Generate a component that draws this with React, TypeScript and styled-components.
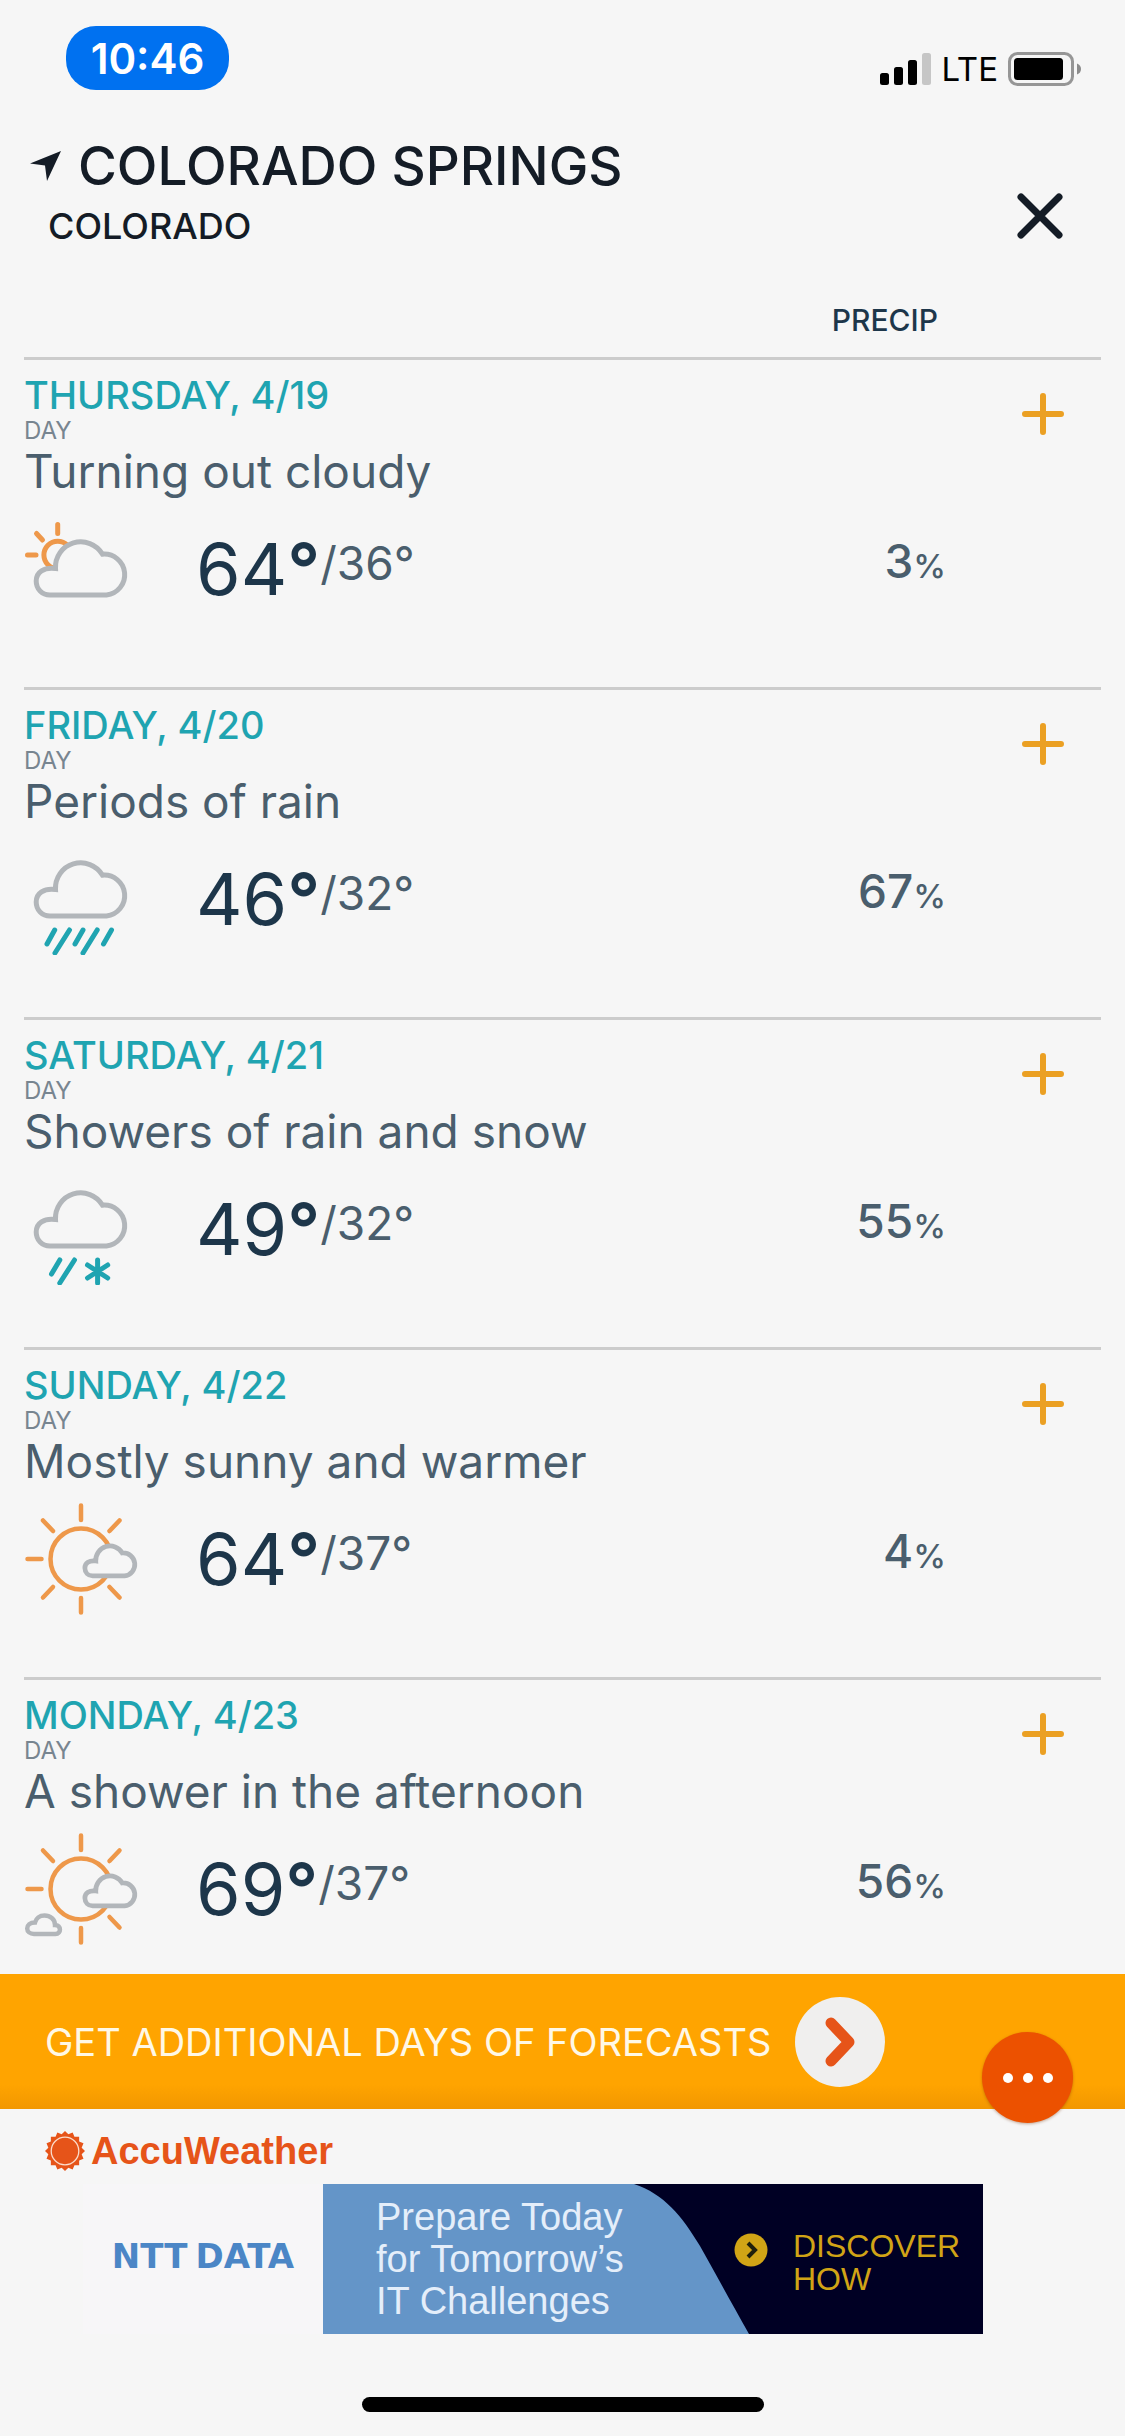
import React from 'react';
import styled, { createGlobalStyle } from 'styled-components';

const color = {
  page: '#f6f6f6',
  ink: '#141c26',
  navy: '#1d364a',
  slate: '#4a5e6d',
  muted: '#788590',
  teal: '#1fa4b1',
  rule: '#cccccc',
  amber: '#ffa400',
  plus: '#eba023',
  sun: '#ee984a',
  cloud: '#b2b6ba',
  brand: '#e65419',
};

const GlobalStyle = createGlobalStyle`
  *, *::before, *::after { box-sizing: border-box; }
  body {
    margin: 0;
    background: ${color.page};
    font-family: Inter, 'Liberation Sans', sans-serif;
  }
  h1, h2, p, ul { margin: 0; padding: 0; font-weight: 400; }
  button { margin: 0; padding: 0; border: 0; background: none; font: inherit; cursor: pointer; }
`;

const Screen = styled.div`
  display: flex;
  flex-direction: column;
  height: 100vh;
  background: ${color.page};
`;

const StatusBar = styled.div`
  display: flex;
  justify-content: space-between;
  align-items: flex-end;
  padding: 26px 43px 0 66px;
`;

const Clock = styled.div`
  display: flex;
  align-items: center;
  justify-content: center;
  width: 163px;
  height: 64px;
  border-radius: 30px;
  background: #0071f0;
  color: #fff;
  font-size: 42px;
  font-weight: 600;
`;

const Signals = styled.div`
  display: flex;
  align-items: center;
  gap: 10px;
  height: 34px;
  margin-bottom: 4px;
`;

const Network = styled.span`
  font-size: 33px;
  line-height: 34px;
  color: #000;
`;

const Header = styled.header`
  display: flex;
  justify-content: space-between;
  align-items: flex-end;
  padding: 46px 55px 0 30px;
`;

const Place = styled.div`
  display: flex;
  flex-direction: column;
  gap: 10px;
`;

const City = styled.h1`
  display: flex;
  align-items: center;
  gap: 16px;
  color: ${color.ink};
  font-size: 53px;
  font-weight: 500;
  line-height: 60px;
`;

const Region = styled.p`
  padding-left: 18px;
  color: ${color.ink};
  font-size: 36px;
  font-weight: 500;
  line-height: 40px;
`;

const IconButton = styled.button`
  display: flex;
  flex: none;
  align-items: center;
  justify-content: center;
  width: 60px;
  height: 60px;
`;

const ColumnTitle = styled.p`
  padding: 56px 187px 18px 0;
  color: ${color.navy};
  font-size: 30px;
  font-weight: 500;
  line-height: 37px;
  text-align: right;
`;

const DayList = styled.ul`
  flex: 1;
  min-height: 0;
  padding: 0 24px;
  overflow: hidden auto;
  scrollbar-width: none;
  list-style: none;
`;

const DayItem = styled.li`
  padding: 13px 0 62px;
  border-top: 3px solid ${color.rule};
`;

const DayHead = styled.div`
  display: flex;
  justify-content: space-between;
  align-items: flex-start;
  padding-right: 28px;
`;

const ExpandButton = styled(IconButton)`
  margin-top: 11px;
`;

const DateLabel = styled.h2`
  color: ${color.teal};
  font-size: 38px;
  font-weight: 500;
  line-height: 44px;
`;

const Period = styled.p`
  color: ${color.muted};
  font-size: 24px;
  line-height: 28px;
`;

const Summary = styled.p`
  color: ${color.slate};
  font-size: 46px;
  line-height: 52px;
`;

const Conditions = styled.div`
  display: flex;
  align-items: center;
  margin-top: 16px;
  padding-right: 155px;
`;

const High = styled.span`
  margin-left: 56px;
  color: ${color.navy};
  font-size: 72px;
  line-height: 112px;
`;

const Degree = styled.span`
  font-weight: 600;
`;

const Low = styled.span`
  padding-bottom: 12px;
  color: ${color.slate};
  font-size: 46px;
  line-height: 52px;
`;

const Precip = styled.span`
  margin-left: auto;
  padding-bottom: 12px;
  color: ${color.slate};
  font-size: 46px;
  font-weight: 500;
  line-height: 52px;
`;

const Percent = styled.span`
  font-size: 33px;
`;

const MoreDays = styled.div`
  position: relative;
  display: flex;
  align-items: center;
  height: 135px;
  padding-left: 45px;
  background: linear-gradient(to bottom, ${color.amber} 82%, #f29700 100%);
`;

const MoreDaysButton = styled.button`
  display: flex;
  align-items: center;
  gap: 24px;
  color: #fff8e6;
  font-size: 38px;
  font-weight: 400;
  line-height: 44px;
`;

const Disc = styled.span`
  display: flex;
  flex: none;
  align-items: center;
  justify-content: center;
  width: 90px;
  height: 90px;
  border-radius: 50%;
  background: #f0efee;
`;

const MenuButton = styled.button`
  position: absolute;
  right: 52px;
  bottom: -14px;
  display: flex;
  align-items: center;
  justify-content: center;
  width: 91px;
  height: 91px;
  border-radius: 50%;
  background: #ec5100;
  box-shadow: 0 1px 3px rgba(120, 50, 0, 0.4);
`;

const Footer = styled.footer`
  display: flex;
  flex-direction: column;
  padding: 20px 0 24px;
`;

const Brand = styled.div`
  display: flex;
  align-items: center;
  gap: 6px;
  padding-left: 45px;
  color: ${color.brand};
  font-family: 'Liberation Sans', Arial, sans-serif;
  font-size: 38px;
  font-weight: 700;
  line-height: 44px;
`;

const Ad = styled.a`
  display: flex;
  width: 900px;
  height: 150px;
  margin: 11px 0 0 83px;
  background: #000024;
  font-family: 'Liberation Sans', Arial, sans-serif;
  text-decoration: none;
`;

const Sponsor = styled.span`
  display: flex;
  align-items: center;
  justify-content: center;
  gap: 8px;
  width: 240px;
  padding-bottom: 6px;
  background: #f7f6f8;
  color: #4b86c6;
  font-family: 'DejaVu Sans', sans-serif;
  font-size: 34px;
  font-weight: 700;
`;

const Pitch = styled.span`
  width: 311px;
  padding: 12px 0 0 53px;
  background: #6495c8;
  color: #e4eefa;
  font-size: 38px;
  line-height: 42px;
  white-space: pre-line;
`;

const Offer = styled.span`
  display: flex;
  align-items: flex-start;
  gap: 25px;
  color: #d1a416;
  font-size: 32px;
  line-height: 33px;
`;

const OfferText = styled.span`
  padding-top: 46px;
`;

const OfferMark = styled.svg`
  margin: 49px 0 0 -15px;
`;

const HomeIndicator = styled.div`
  align-self: center;
  width: 402px;
  height: 15px;
  margin-top: 63px;
  border-radius: 8px;
  background: #000;
`;

const CLOUD =
  'M26 82H82.5A20.5 20.5 0 0 0 78.5 41.2A25.3 25.3 0 0 0 31.5 55.5C20 54 12.2 59 12.2 68C12.2 76 18 82 26 82Z';

function Cloud({ transform, width = 5 }: { transform?: string; width?: number }) {
  return <path d={CLOUD} transform={transform} stroke={color.cloud} strokeWidth={width} fill={color.page} />;
}

type Kind = 'clouding' | 'rain' | 'mixed' | 'sunny' | 'shower';

function WeatherIcon({ kind }: { kind: Kind }) {
  const bright = kind === 'sunny' || kind === 'shower';
  return (
    <svg width="116" height="112" viewBox="0 0 116 112" fill="none" strokeLinecap="round" aria-hidden="true">
      {kind === 'clouding' && (
        <>
          <g stroke={color.sun} strokeWidth="5">
            <circle cx="33.7" cy="42" r="13.8" />
            <path d="M33.7 11.5V20.5M3.5 42H12M12.5 20.5L18.500 27" />
          </g>
          <Cloud />
        </>
      )}
      {kind === 'rain' && (
        <>
          <Cloud transform="translate(0 -9)" />
          <path
            stroke={color.teal}
            strokeWidth="5"
            d="M30.7 87L23 101M45.5 87L31 110M59 87L51 101M73.2 87L59 110M87.5 87L79.5 101"
          />
        </>
      )}
      {kind === 'mixed' && (
        <>
          <Cloud transform="translate(0 -9)" />
          <path
            stroke={color.teal}
            strokeWidth="5"
            d="M35.8 87L27.5 101M50.5 87L35.8 110M73.6 87V110M63.5 92L83.7 105M83.7 92L63.5 105"
          />
        </>
      )}
      {bright && (
        <>
          <g stroke={color.sun} strokeWidth="4.5">
            <circle cx="57" cy="56" r="30.5" />
            <path d="M57 2.5V17M57 95V109.5M3.5 56H17.5M19 17.5L29 28M95.5 17.5L85.5 28M95.5 94.5L85.5 84" />
            {kind === 'sunny' && <path d="M19 94.5L29 84" />}
          </g>
          <Cloud transform="translate(54 26.7) scale(.564)" width={8.4} />
        </>
      )}
      {kind === 'shower' && (
        <path
          d="M10 101H31.5C37.5 101 37.5 92 31 92C31 86 26 82.6 20.5 82.6C15.5 82.6 12 85.5 11 89.5C6 89.5 3.2 92 3.2 95.5C3.2 98.5 6 101 10 101Z"
          stroke={color.cloud}
          strokeWidth="4.5"
          fill={color.page}
        />
      )}
    </svg>
  );
}

function BrandSun() {
  const points = Array.from({ length: 32 }, (_, i) => {
    const radius = i % 2 ? 17 : 20;
    const angle = (i * Math.PI) / 16;
    return `${20 + radius * Math.sin(angle)},${20 - radius * Math.cos(angle)}`;
  }).join(' ');
  return (
    <svg width="40" height="40" viewBox="0 0 40 40" aria-hidden="true">
      <polygon points={points} fill={color.brand} />
      <circle cx="20" cy="20" r="13.8" fill="none" stroke="#fbdccb" strokeWidth="1.3" />
    </svg>
  );
}

interface Day {
  date: string;
  summary: string;
  high: number;
  low: number;
  precip: number;
  kind: Kind;
}

const days: Day[] = [
  { date: 'THURSDAY, 4/19', summary: 'Turning out cloudy', high: 64, low: 36, precip: 3, kind: 'clouding' },
  { date: 'FRIDAY, 4/20', summary: 'Periods of rain', high: 46, low: 32, precip: 67, kind: 'rain' },
  { date: 'SATURDAY, 4/21', summary: 'Showers of rain and snow', high: 49, low: 32, precip: 55, kind: 'mixed' },
  { date: 'SUNDAY, 4/22', summary: 'Mostly sunny and warmer', high: 64, low: 37, precip: 4, kind: 'sunny' },
  { date: 'MONDAY, 4/23', summary: 'A shower in the afternoon', high: 69, low: 37, precip: 56, kind: 'shower' },
];

function DayRow({ day }: { day: Day }) {
  return (
    <DayItem>
      <DayHead>
        <div>
          <DateLabel>{day.date}</DateLabel>
          <Period>DAY</Period>
          <Summary>{day.summary}</Summary>
        </div>
        <ExpandButton aria-label={`Expand ${day.date}`}>
          <svg width="44" height="44" viewBox="0 0 44 44" stroke={color.plus} strokeWidth="6" strokeLinecap="round" aria-hidden="true">
            <path d="M22 4V40M4 22H40" />
          </svg>
        </ExpandButton>
      </DayHead>
      <Conditions>
        <WeatherIcon kind={day.kind} />
        <High>
          {day.high}
          <Degree>°</Degree>
        </High>
        <Low>/{day.low}°</Low>
        <Precip>
          {day.precip}
          <Percent>%</Percent>
        </Precip>
      </Conditions>
    </DayItem>
  );
}

export default function App() {
  return (
    <>
      <GlobalStyle />
      <Screen>
        <StatusBar>
          <Clock>10:46</Clock>
          <Signals>
            <svg width="51" height="34" viewBox="0 0 51 34" aria-hidden="true">
              <rect x="0" y="21" width="9" height="12" rx="2.5" />
              <rect x="14" y="15" width="9" height="18" rx="2.5" />
              <rect x="28" y="8" width="9" height="25" rx="2.5" />
              <rect x="42" y="1" width="9" height="32" rx="2.5" fill="#c6c6c6" />
            </svg>
            <Network>LTE</Network>
            <svg width="74" height="34" viewBox="0 0 74 34" aria-hidden="true">
              <rect x="1.5" y="1.5" width="63" height="31" rx="8" fill="none" stroke="#969696" strokeWidth="3" />
              <rect x="6" y="6" width="49" height="22" rx="3.5" />
              <path d="M69 11.5Q73 13 73 17T69 22.5Z" fill="#8c8c8c" />
            </svg>
          </Signals>
        </StatusBar>
        <Header>
          <Place>
            <City>
              <svg width="32" height="32" viewBox="0 0 32 32" fill={color.ink} aria-hidden="true">
                <path d="M31 1L0 13.5L15 15.5L17 31Z" />
              </svg>
              COLORADO SPRINGS
            </City>
            <Region>COLORADO</Region>
          </Place>
          <IconButton aria-label="Close">
            <svg width="46" height="46" viewBox="0 0 46 46" stroke={color.ink} strokeWidth="7" strokeLinecap="round" aria-hidden="true">
              <path d="M4 4L42 42M42 4L4 42" />
            </svg>
          </IconButton>
        </Header>
        <ColumnTitle>PRECIP</ColumnTitle>
        <DayList>
          {days.map((day) => (
            <DayRow key={day.date} day={day} />
          ))}
        </DayList>
        <MoreDays>
          <MoreDaysButton>
            GET ADDITIONAL DAYS OF FORECASTS
            <Disc>
              <svg width="32" height="50" viewBox="0 0 32 50" fill="none" stroke={color.brand} strokeWidth="11" strokeLinecap="round" strokeLinejoin="round" aria-hidden="true">
                <path d="M7 6L25 25L7 44" />
              </svg>
            </Disc>
          </MoreDaysButton>
          <MenuButton aria-label="More">
            <svg width="50" height="10" viewBox="0 0 50 10" fill="#fff" aria-hidden="true">
              <circle cx="5" cy="5" r="5" />
              <circle cx="25" cy="5" r="5" />
              <circle cx="45" cy="5" r="5" />
            </svg>
          </MenuButton>
        </MoreDays>
        <Footer>
          <Brand>
            <BrandSun />
            AccuWeather
          </Brand>
          <Ad href="#">
            <Sponsor>
              <span>NTT</span>
              <span>DATA</span>
            </Sponsor>
            <Pitch>{'Prepare Today\nfor Tomorrow’s\nIT Challenges'}</Pitch>
            <svg width="115" height="150" viewBox="0 0 115 150" aria-hidden="true">
              <path d="M0 0C30 10 48 32 66 62C80 87 97 118 115 150H0Z" fill="#6495c8" />
            </svg>
            <Offer>
              <OfferMark width="34" height="34" viewBox="0 0 34 34" aria-hidden="true">
                <circle cx="17" cy="17" r="16.5" fill="#d1a416" />
                <path d="M14 10L21 17L14 24" fill="none" stroke="#20200c" strokeWidth="4" />
              </OfferMark>
              <OfferText>
                DISCOVER
                <br />
                HOW
              </OfferText>
            </Offer>
          </Ad>
          <HomeIndicator />
        </Footer>
      </Screen>
    </>
  );
}
